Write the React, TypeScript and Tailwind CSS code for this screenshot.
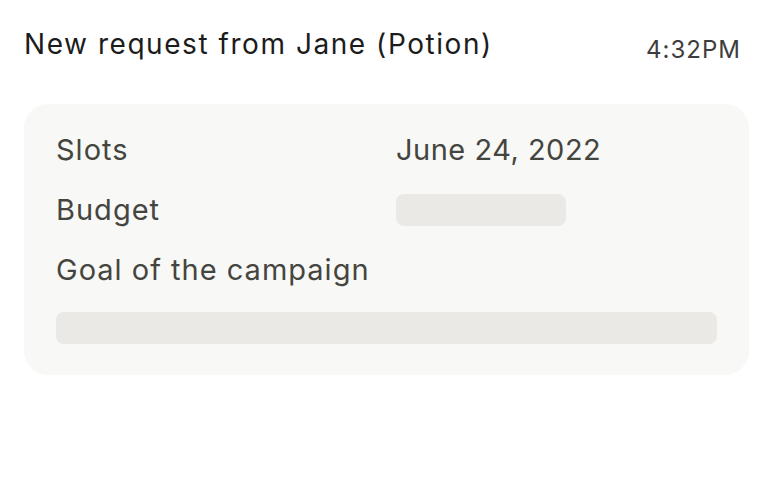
import React from "react";

export default function App() {
  return (
    <div className="w-[772px] h-[502px] bg-white" style={{ fontFamily: "Inter, 'Noto Sans', sans-serif" }}>
      <div className="flex items-start justify-between pl-6 pr-[31px] pt-[28px]">
        <div className="text-[28px] leading-[32px] text-[#1c1c1c] tracking-[1.55px]">New request from Jane (Potion)</div>
        <div className="text-[24px] leading-[32px] text-[#3d3d3d] mt-[6px] tracking-[1px]">4:32PM</div>
      </div>
      <div className="mx-6 mt-[38px] w-[725px] rounded-[24px] bg-[#f8f8f6] px-8 pt-[26px] pb-[31px] text-[29px] tracking-[1px] text-[#45453f]">
        <div className="flex flex-col gap-5">
          <div className="flex h-10 items-center">
            <div className="w-[340px]">Slots</div>
            <div className="tracking-[0.5px]">June 24, 2022</div>
          </div>
          <div className="flex h-10 items-center">
            <div className="w-[340px]">Budget</div>
            <div className="h-8 w-[170px] rounded-lg bg-[#ebe9e6]" />
          </div>
          <div className="flex h-10 items-center">
            <div className="w-[340px]">Goal of the campaign</div>
          </div>
        </div>
        <div className="mt-[22px] h-8 rounded-lg bg-[#ebe9e6]" />
      </div>
    </div>
  );
}
